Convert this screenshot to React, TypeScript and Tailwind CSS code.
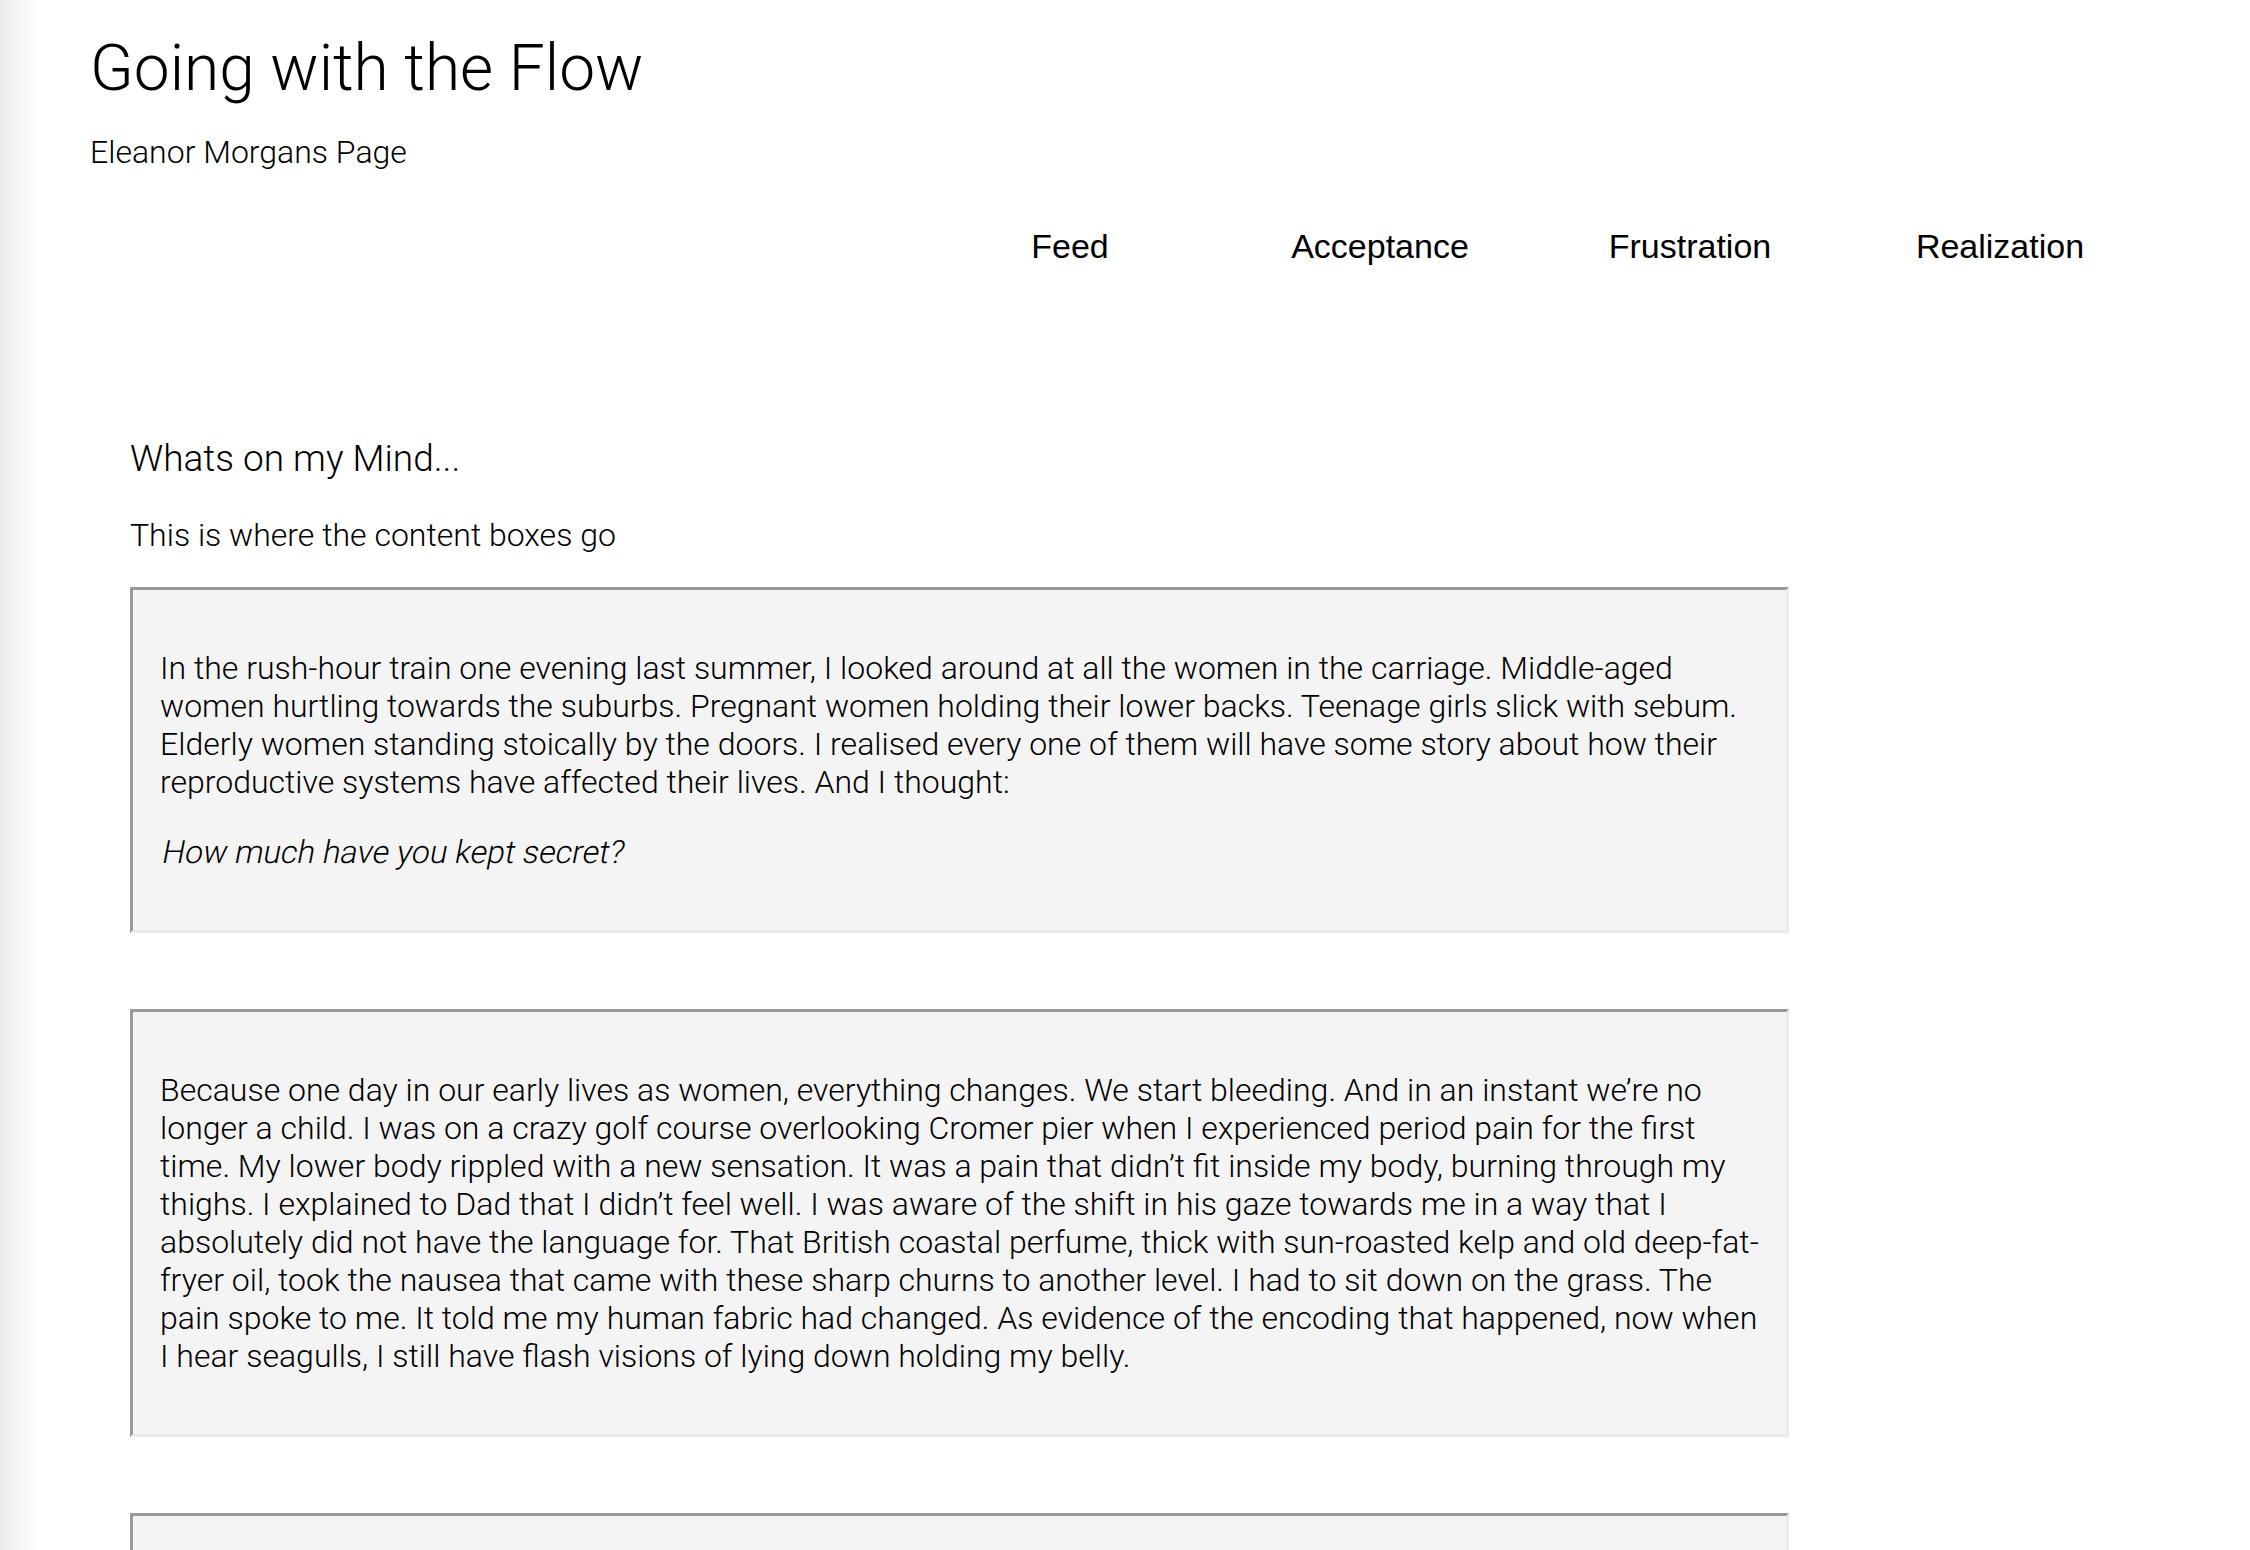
import React from "react";

const navItems = ["Feed", "Acceptance", "Frustration", "Realization"];

const posts: { text: string; aside?: string }[] = [
    {
        text: "In the rush-hour train one evening last summer, I looked around at all the women in the carriage. Middle-aged women hurtling towards the suburbs. Pregnant women holding their lower backs. Teenage girls slick with sebum. Elderly women standing stoically by the doors. I realised every one of them will have some story about how their reproductive systems have affected their lives. And I thought:",
        aside: "How much have you kept secret?",
    },
    {
        text: "Because one day in our early lives as women, everything changes. We start bleeding. And in an instant we\u2019re no longer a child. I was on a crazy golf course overlooking Cromer pier when I experienced period pain for the first time. My lower body rippled with a new sensation. It was a pain that didn\u2019t fit inside my body, burning through my thighs. I explained to Dad that I didn\u2019t feel well. I was aware of the shift in his gaze towards me in a way that I absolutely did not have the language for. That British coastal perfume, thick with sun-roasted kelp and old deep-fat-fryer oil, took the nausea that came with these sharp churns to another level. I had to sit down on the grass. The pain spoke to me. It told me my human fabric had changed. As evidence of the encoding that happened, now when I hear seagulls, I still have flash visions of lying down holding my belly.",
    },
];

function PostBox({ text, aside }: { text?: string; aside?: string }) {
    return (
        <div className="w-[1659px] bg-[#f4f4f4] border-[3px] border-t-[#9a9a9a] border-l-[#9a9a9a] border-r-[#ececec] border-b-[#ececec] p-[27px] mb-[76px]">
            {text ? <p className="my-8 text-[32px] leading-[38px] font-light">{text}</p> : <div className="h-[300px]" />}
            {aside && (
                <p className="my-8 text-[32px] leading-[38px] font-light">
                    <span className="inline-block -skew-x-[11deg] translate-x-[3px]">{aside}</span>
                </p>
            )}
        </div>
    );
}

export default function App() {
    return (
        <div className="min-h-screen bg-[linear-gradient(to_right,#ebebeb,#ffffff_40px)] text-black font-['Roboto',sans-serif] overflow-hidden">
            <header className="pl-[90px] pt-[31px]">
                <h1 className="text-[64px] leading-[75px] font-light">Going with the Flow</h1>
                <p className="mt-[28px] text-[32px] leading-[37.5px] font-light">Eleanor Morgans Page</p>
            </header>

            <nav className="flex justify-end pr-[95px] mt-[55px]">
                {navItems.map((item) => (
                    <a key={item} href="#" className="w-[310px] text-center text-[34px] leading-[39px] font-['Liberation_Sans',Arial,sans-serif]">
                        {item}
                    </a>
                ))}
            </nav>

            <main className="pl-[130px] mt-[171px]">
                <h2 className="text-[37px] leading-[43px] font-light">Whats on my Mind...</h2>
                <p className="mt-[37px] text-[32px] leading-[37.5px] font-light">This is where the content boxes go</p>
                <div className="mt-[33px]">
                    {posts.map((post, i) => (
                        <PostBox key={i} text={post.text} aside={post.aside} />
                    ))}
                    <PostBox />
                </div>
            </main>
        </div>
    );
}
